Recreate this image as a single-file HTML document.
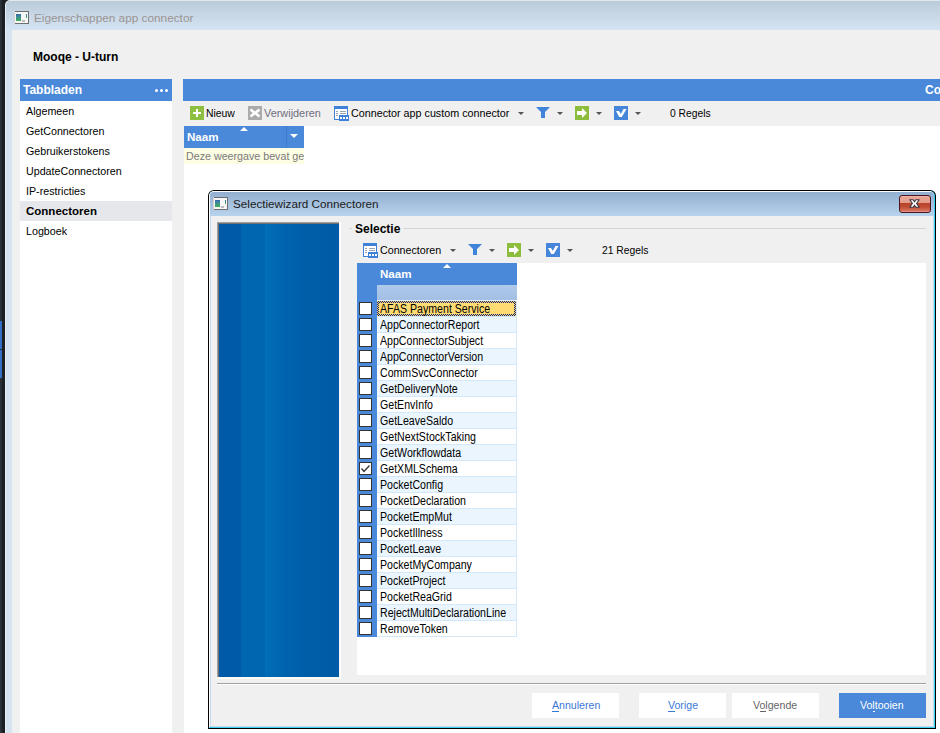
<!DOCTYPE html>
<html><head><meta charset="utf-8">
<style>
*{margin:0;padding:0;box-sizing:border-box}
html,body{width:940px;height:733px;overflow:hidden;background:#fff;font-family:"Liberation Sans",sans-serif;font-size:11px;color:#000}
.a{position:absolute}
.t{position:absolute;white-space:pre;line-height:1}
.w{color:#fff;font-weight:bold}
.dd{position:absolute;width:0;height:0;border-left:3px solid transparent;border-right:3px solid transparent;border-top:3px solid #505050}
</style></head><body>

<!-- dark strip -->
<div class="a" style="left:0;top:0;width:12px;height:733px;background:#1c2024"></div>
<div class="a" style="left:0;top:0;width:2px;height:733px;background:#2a3038"></div>
<div class="a" style="left:0;top:321px;width:2px;height:28px;background:#3270c6"></div>
<div class="a" style="left:0;top:350px;width:2px;height:28px;background:#3270c6"></div>

<!-- main window frame -->
<div class="a" style="left:5px;top:0;width:935px;height:733px;background:#e8eef6;border-top-left-radius:5px"></div>
<div class="a" style="left:6px;top:1px;width:934px;height:732px;background:#d6e3f1;border-top-left-radius:4px"></div>
<div class="a" style="left:9px;top:0;width:931px;height:1px;background:#e2e6ee"></div>
<div class="a" style="left:6px;top:1px;width:934px;height:29px;background:linear-gradient(#bacbd9,#d5e4f2);border-top-left-radius:4px"></div>
<div class="a" style="left:12px;top:30px;width:928px;height:703px;background:#f0f0f0"></div>

<!-- title icon -->
<svg class="a" style="left:14px;top:11px" width="15" height="13" shape-rendering="crispEdges"><defs><linearGradient id="i1g" x1="0" y1="0" x2="0" y2="1"><stop offset="0" stop-color="#3568b0"/><stop offset="0.35" stop-color="#3f8a98"/><stop offset="1" stop-color="#3cb058"/></linearGradient></defs><rect x="0" y="0" width="15" height="13" fill="#f6f6f6"/><rect x="0" y="0" width="15" height="1" fill="#6c6c6c"/><rect x="0" y="12" width="15" height="1" fill="#707070"/><rect x="14" y="0" width="1" height="13" fill="#6c6c6c"/><rect x="0" y="0" width="1" height="13" fill="#d4d4d4"/><rect x="2" y="3" width="5" height="7" fill="url(#i1g)"/><rect x="8" y="9" width="3" height="2" fill="#bcbcbc"/><rect x="12" y="3" width="1" height="4" fill="url(#i1g)"/></svg>
<div class="t" style="left:34px;top:13px;font-size:11.8px;color:#9b9494">Eigenschappen app connector</div>

<div class="t" style="left:33px;top:51px;font-size:12px;font-weight:bold">Mooqe - U-turn</div>

<!-- left panel -->
<div class="a" style="left:20px;top:79px;width:152px;height:654px;background:#fff"></div>
<div class="a" style="left:20px;top:79px;width:152px;height:22px;background:#4a88d9"></div>
<div class="t w" style="left:23px;top:84px;font-size:12px">Tabbladen</div>
<div class="a" style="left:155px;top:89px;width:3px;height:3px;border-radius:2px;background:#fff"></div>
<div class="a" style="left:160px;top:89px;width:3px;height:3px;border-radius:2px;background:#fff"></div>
<div class="a" style="left:165px;top:89px;width:3px;height:3px;border-radius:2px;background:#fff"></div>
<div class="a" style="left:20px;top:201px;width:152px;height:20px;background:#e6e7eb"></div>
<div class="t" style="left:26px;top:106px;font-size:10.7px">Algemeen</div>
<div class="t" style="left:26px;top:126px;font-size:10.7px">GetConnectoren</div>
<div class="t" style="left:26px;top:146px;font-size:10.7px">Gebruikerstokens</div>
<div class="t" style="left:26px;top:166px;font-size:10.7px">UpdateConnectoren</div>
<div class="t" style="left:26px;top:186px;font-size:10.7px">IP-restricties</div>
<div class="t" style="left:26px;top:206px;font-size:11.5px;font-weight:bold">Connectoren</div>
<div class="t" style="left:26px;top:226px;font-size:10.7px">Logboek</div>

<!-- right panel -->
<div class="a" style="left:183px;top:79px;width:757px;height:22px;background:#4a88d9"></div>
<div class="t w" style="left:925px;top:84px;font-size:12px">Co</div>
<div class="a" style="left:184px;top:126px;width:756px;height:607px;background:#fff"></div>

<!-- toolbar -->
<svg class="a" style="left:0;top:0" width="940" height="733" shape-rendering="crispEdges">
  <!-- plus -->
  <rect x="190" y="106" width="14" height="14" fill="#8fbf40"/>
  <rect x="193" y="112" width="8" height="2" fill="#fff"/>
  <rect x="196" y="109" width="2" height="8" fill="#fff"/>
  <!-- grey x -->
  <rect x="248" y="106" width="14" height="14" fill="#ababab"/>
  <path d="M250.5 109.5 L259.5 116.5 M259.5 109.5 L250.5 116.5" stroke="#fff" stroke-width="2.6" shape-rendering="geometricPrecision"/>
</svg>
<svg class="a" style="left:0;top:0" width="940" height="733" shape-rendering="crispEdges">
 <g id="tbi">
  <!-- connector icon -->
  <rect x="334" y="106" width="14" height="14" fill="#3f80d9"/>
  <rect x="335" y="109" width="12" height="10" fill="#fff"/>
  <rect x="336" y="111" width="2" height="1" fill="#9aa4b0"/><rect x="340" y="111" width="6" height="1" fill="#9aa4b0"/>
  <rect x="336" y="113" width="2" height="1" fill="#9aa4b0"/><rect x="340" y="113" width="6" height="1" fill="#9aa4b0"/>
  <rect x="336" y="115" width="2" height="1" fill="#9aa4b0"/>
  <rect x="339" y="115" width="10" height="6" fill="#3f80d9"/>
  <rect x="340" y="117" width="2" height="2" fill="#fff"/><rect x="343" y="117" width="2" height="2" fill="#fff"/><rect x="346" y="117" width="2" height="2" fill="#fff"/>
 </g>
 <g id="tbr">
  <path d="M518 112 L524 112 L521 115 Z" fill="#555" shape-rendering="geometricPrecision"/>
  <path d="M536 107 L550 107 L545 112 L545 118 L541 118 L541 112 Z" fill="#4084da" shape-rendering="geometricPrecision"/>
  <path d="M557 112 L563 112 L560 115 Z" fill="#555" shape-rendering="geometricPrecision"/>
  <rect x="575" y="106" width="14" height="14" fill="#8cbd3c"/>
  <path d="M577 111 L582 111 L582 108 L587 113 L582 118 L582 115 L577 115 Z" fill="#fff" shape-rendering="geometricPrecision"/>
  <path d="M596 112 L602 112 L599 115 Z" fill="#555" shape-rendering="geometricPrecision"/>
  <rect x="614" y="106" width="14" height="14" fill="#4686da"/>
  <path d="M616 111 L619 111 L620.8 114 L623.5 109 L626.5 109 L621.8 117 L619.2 117 Z" fill="#fff" shape-rendering="geometricPrecision"/>
  <path d="M635 112 L641 112 L638 115 Z" fill="#555" shape-rendering="geometricPrecision"/>
 </g>
</svg>
<div class="t" style="left:206px;top:109px;font-size:10.4px">Nieuw</div>
<div class="t" style="left:264px;top:108px;font-size:10.9px;color:#6e6e7e">Verwijderen</div>
<div class="t" style="left:351px;top:108px;font-size:10.75px">Connector app custom connector</div>
<div class="t" style="left:670px;top:109px;font-size:10.3px">0 Regels</div>

<!-- grid 1 -->
<div class="a" style="left:184px;top:126px;width:120px;height:22px;background:#4a88d9"></div>
<div class="a" style="left:286px;top:126px;width:1px;height:22px;background:#3d7bd0"></div>
<div class="t w" style="left:187px;top:131px;font-size:11.6px">Naam</div>
<div class="a" style="left:240px;top:127px;width:0;height:0;border-left:4px solid transparent;border-right:4px solid transparent;border-bottom:4px solid #fff"></div>
<div class="a" style="left:290px;top:134px;width:0;height:0;border-left:4px solid transparent;border-right:4px solid transparent;border-top:4px solid #fff"></div>
<div class="a" style="left:184px;top:148px;width:120px;height:16px;background:#fdfde4;overflow:hidden"><div class="t" style="left:2px;top:3px;font-size:10.7px;color:#7a7a7a">Deze weergave bevat geen</div></div>

<!-- dialog -->
<!-- dialog frame -->
<div class="a" style="left:208px;top:190px;width:728px;height:539px;background:#000;border-radius:6px 6px 0 0"></div>
<div class="a" style="left:209px;top:191px;width:726px;height:537px;background:#3cd0f0;border-radius:5px 5px 0 0"></div>
<div class="a" style="left:209px;top:191px;width:725px;height:536px;background:#fff;border-radius:5px 5px 0 0"></div>
<div class="a" style="left:210px;top:192px;width:724px;height:535px;background:#c4d8ee;border-radius:4px 4px 0 0"></div>
<div class="a" style="left:210px;top:192px;width:724px;height:24px;background:linear-gradient(#93afd0,#b8d3ec);border-radius:4px 4px 0 0"></div>
<div class="a" style="left:211px;top:216px;width:722px;height:510px;background:#f0f0f0"></div>
<!-- dialog icon -->
<svg class="a" style="left:213px;top:197px" width="15" height="13" shape-rendering="crispEdges"><defs><linearGradient id="i2g" x1="0" y1="0" x2="0" y2="1"><stop offset="0" stop-color="#3568b0"/><stop offset="0.35" stop-color="#3f8a98"/><stop offset="1" stop-color="#3cb058"/></linearGradient></defs><rect x="0" y="0" width="15" height="13" fill="#f6f6f6"/><rect x="0" y="0" width="15" height="1" fill="#6c6c6c"/><rect x="0" y="12" width="15" height="1" fill="#707070"/><rect x="14" y="0" width="1" height="13" fill="#6c6c6c"/><rect x="0" y="0" width="1" height="13" fill="#d4d4d4"/><rect x="2" y="3" width="5" height="7" fill="url(#i2g)"/><rect x="8" y="9" width="3" height="2" fill="#bcbcbc"/><rect x="12" y="3" width="1" height="4" fill="url(#i2g)"/></svg>
<div class="t" style="left:233px;top:198px;font-size:11.7px;color:#1a1a1a">Selectiewizard Connectoren</div>
<!-- close btn -->
<div class="a" style="left:899px;top:195px;width:32px;height:18px;border:1px solid #4a1520;border-radius:3px;background:linear-gradient(#f0c0b0 0,#e8a494 1px,#e49c8a 7px,#b84028 7px,#c04c34 11px,#d87462 15px,#eab0a0 16px)"></div>
<svg class="a" style="left:899px;top:195px" width="32" height="18"><path d="M10.8 4.8 L14.2 4.8 L15.5 6.8 L16.8 4.8 L20.2 4.8 L17.6 8.5 L20.2 12.2 L16.8 12.2 L15.5 10.2 L14.2 12.2 L10.8 12.2 L13.4 8.5 Z" fill="#fff" stroke="#3a3440" stroke-width="1.1" stroke-linejoin="round"/></svg>

<!-- wizard blue panel -->
<div class="a" style="left:217px;top:222px;width:124px;height:457px;background:#fff"></div>
<div class="a" style="left:217px;top:222px;width:123px;height:456px;background:#fcfaf8"></div>
<div class="a" style="left:217px;top:222px;width:122px;height:455px;background:#a0a0a0"></div>
<div class="a" style="left:218px;top:223px;width:121px;height:454px;background:#707070"></div>
<div class="a" style="left:219px;top:224px;width:120px;height:453px;background:linear-gradient(90deg,#005aa8 0,#005aa8 22px,#0066b0 22px,#0066b0 46px,#006eb8 46px,#0068b2 58px,#0062ae 67px,#005ea8 86px,#005aa6 100%)"></div>

<!-- group box -->
<div class="a" style="left:349px;top:228px;width:3px;height:1px;background:#d5d5d5"></div>
<div class="a" style="left:403px;top:228px;width:523px;height:1px;background:#d5d5d5"></div>
<div class="t" style="left:355px;top:223px;font-size:12px;font-weight:bold">Selectie</div>

<!-- dialog toolbar -->
<svg class="a" style="left:0;top:0" width="940" height="733" shape-rendering="crispEdges">
  <use href="#tbi" transform="translate(29,137)"/>
  <use href="#tbr" transform="translate(-68,137)"/>
</svg>
<div class="t" style="left:380px;top:245px;font-size:10.7px">Connectoren</div>
<div class="t" style="left:602px;top:246px;font-size:10.3px">21 Regels</div>

<!-- grid area -->
<div class="a" style="left:357px;top:263px;width:569px;height:412px;background:#fff"></div>
<div class="a" style="left:357px;top:263px;width:160px;height:22px;background:#4a88d9"></div>
<div class="a" style="left:357px;top:263px;width:20px;height:374px;background:#4a88d9"></div>
<div class="t w" style="left:380px;top:268px;font-size:11.6px">Naam</div>
<div class="a" style="left:443px;top:264px;width:0;height:0;border-left:4px solid transparent;border-right:4px solid transparent;border-bottom:4px solid #fff"></div>
<div class="a" style="left:377px;top:285px;width:140px;height:15px;background:linear-gradient(#b0c9ea,#a2bfe6)"></div>
<!--ROWS-->
<div class="a" style="left:377px;top:301px;width:140px;height:16px;background:#ffdb73;border-bottom:1px solid #d4e8fb;border-right:1px solid #d4e8fb"></div>
<div class="a" style="left:377px;top:300px;width:140px;height:1px;background:#e6f0fb"></div>
<div class="a" style="left:377px;top:301px;width:139px;height:15px;background:repeating-conic-gradient(#101c78 0 25%,#ffdb73 0 50%) 0 0/2px 2px"></div>
<div class="a" style="left:379px;top:303px;width:135px;height:11px;background:#ffdb73"></div>
<div class="t" style="left:380px;top:303px;font-size:12px;transform:scaleX(0.883);transform-origin:0 0">AFAS Payment Service</div>
<div class="a" style="left:359px;top:302px;width:13px;height:13px;background:#fff;border:1.5px solid #333"></div>
<div class="a" style="left:377px;top:317px;width:140px;height:16px;background:#eaf5fe;border-bottom:1px solid #d4e8fb;border-right:1px solid #d4e8fb"></div>
<div class="t" style="left:380px;top:319px;font-size:12px;transform:scaleX(0.883);transform-origin:0 0">AppConnectorReport</div>
<div class="a" style="left:359px;top:318px;width:13px;height:13px;background:#fff;border:1.5px solid #333"></div>
<div class="a" style="left:377px;top:333px;width:140px;height:16px;background:#fff;border-bottom:1px solid #d4e8fb;border-right:1px solid #d4e8fb"></div>
<div class="t" style="left:380px;top:335px;font-size:12px;transform:scaleX(0.883);transform-origin:0 0">AppConnectorSubject</div>
<div class="a" style="left:359px;top:334px;width:13px;height:13px;background:#fff;border:1.5px solid #333"></div>
<div class="a" style="left:377px;top:349px;width:140px;height:16px;background:#eaf5fe;border-bottom:1px solid #d4e8fb;border-right:1px solid #d4e8fb"></div>
<div class="t" style="left:380px;top:351px;font-size:12px;transform:scaleX(0.883);transform-origin:0 0">AppConnectorVersion</div>
<div class="a" style="left:359px;top:350px;width:13px;height:13px;background:#fff;border:1.5px solid #333"></div>
<div class="a" style="left:377px;top:365px;width:140px;height:16px;background:#fff;border-bottom:1px solid #d4e8fb;border-right:1px solid #d4e8fb"></div>
<div class="t" style="left:380px;top:367px;font-size:12px;transform:scaleX(0.883);transform-origin:0 0">CommSvcConnector</div>
<div class="a" style="left:359px;top:366px;width:13px;height:13px;background:#fff;border:1.5px solid #333"></div>
<div class="a" style="left:377px;top:381px;width:140px;height:16px;background:#eaf5fe;border-bottom:1px solid #d4e8fb;border-right:1px solid #d4e8fb"></div>
<div class="t" style="left:380px;top:383px;font-size:12px;transform:scaleX(0.883);transform-origin:0 0">GetDeliveryNote</div>
<div class="a" style="left:359px;top:382px;width:13px;height:13px;background:#fff;border:1.5px solid #333"></div>
<div class="a" style="left:377px;top:397px;width:140px;height:16px;background:#fff;border-bottom:1px solid #d4e8fb;border-right:1px solid #d4e8fb"></div>
<div class="t" style="left:380px;top:399px;font-size:12px;transform:scaleX(0.883);transform-origin:0 0">GetEnvInfo</div>
<div class="a" style="left:359px;top:398px;width:13px;height:13px;background:#fff;border:1.5px solid #333"></div>
<div class="a" style="left:377px;top:413px;width:140px;height:16px;background:#eaf5fe;border-bottom:1px solid #d4e8fb;border-right:1px solid #d4e8fb"></div>
<div class="t" style="left:380px;top:415px;font-size:12px;transform:scaleX(0.883);transform-origin:0 0">GetLeaveSaldo</div>
<div class="a" style="left:359px;top:414px;width:13px;height:13px;background:#fff;border:1.5px solid #333"></div>
<div class="a" style="left:377px;top:429px;width:140px;height:16px;background:#fff;border-bottom:1px solid #d4e8fb;border-right:1px solid #d4e8fb"></div>
<div class="t" style="left:380px;top:431px;font-size:12px;transform:scaleX(0.883);transform-origin:0 0">GetNextStockTaking</div>
<div class="a" style="left:359px;top:430px;width:13px;height:13px;background:#fff;border:1.5px solid #333"></div>
<div class="a" style="left:377px;top:445px;width:140px;height:16px;background:#eaf5fe;border-bottom:1px solid #d4e8fb;border-right:1px solid #d4e8fb"></div>
<div class="t" style="left:380px;top:447px;font-size:12px;transform:scaleX(0.883);transform-origin:0 0">GetWorkflowdata</div>
<div class="a" style="left:359px;top:446px;width:13px;height:13px;background:#fff;border:1.5px solid #333"></div>
<div class="a" style="left:377px;top:461px;width:140px;height:16px;background:#fff;border-bottom:1px solid #d4e8fb;border-right:1px solid #d4e8fb"></div>
<div class="t" style="left:380px;top:463px;font-size:12px;transform:scaleX(0.883);transform-origin:0 0">GetXMLSchema</div>
<div class="a" style="left:359px;top:462px;width:13px;height:13px;background:#fff;border:1.5px solid #333"></div>
<div class="a" style="left:377px;top:477px;width:140px;height:16px;background:#eaf5fe;border-bottom:1px solid #d4e8fb;border-right:1px solid #d4e8fb"></div>
<div class="t" style="left:380px;top:479px;font-size:12px;transform:scaleX(0.883);transform-origin:0 0">PocketConfig</div>
<div class="a" style="left:359px;top:478px;width:13px;height:13px;background:#fff;border:1.5px solid #333"></div>
<div class="a" style="left:377px;top:493px;width:140px;height:16px;background:#fff;border-bottom:1px solid #d4e8fb;border-right:1px solid #d4e8fb"></div>
<div class="t" style="left:380px;top:495px;font-size:12px;transform:scaleX(0.883);transform-origin:0 0">PocketDeclaration</div>
<div class="a" style="left:359px;top:494px;width:13px;height:13px;background:#fff;border:1.5px solid #333"></div>
<div class="a" style="left:377px;top:509px;width:140px;height:16px;background:#eaf5fe;border-bottom:1px solid #d4e8fb;border-right:1px solid #d4e8fb"></div>
<div class="t" style="left:380px;top:511px;font-size:12px;transform:scaleX(0.883);transform-origin:0 0">PocketEmpMut</div>
<div class="a" style="left:359px;top:510px;width:13px;height:13px;background:#fff;border:1.5px solid #333"></div>
<div class="a" style="left:377px;top:525px;width:140px;height:16px;background:#fff;border-bottom:1px solid #d4e8fb;border-right:1px solid #d4e8fb"></div>
<div class="t" style="left:380px;top:527px;font-size:12px;transform:scaleX(0.883);transform-origin:0 0">PocketIllness</div>
<div class="a" style="left:359px;top:526px;width:13px;height:13px;background:#fff;border:1.5px solid #333"></div>
<div class="a" style="left:377px;top:541px;width:140px;height:16px;background:#eaf5fe;border-bottom:1px solid #d4e8fb;border-right:1px solid #d4e8fb"></div>
<div class="t" style="left:380px;top:543px;font-size:12px;transform:scaleX(0.883);transform-origin:0 0">PocketLeave</div>
<div class="a" style="left:359px;top:542px;width:13px;height:13px;background:#fff;border:1.5px solid #333"></div>
<div class="a" style="left:377px;top:557px;width:140px;height:16px;background:#fff;border-bottom:1px solid #d4e8fb;border-right:1px solid #d4e8fb"></div>
<div class="t" style="left:380px;top:559px;font-size:12px;transform:scaleX(0.883);transform-origin:0 0">PocketMyCompany</div>
<div class="a" style="left:359px;top:558px;width:13px;height:13px;background:#fff;border:1.5px solid #333"></div>
<div class="a" style="left:377px;top:573px;width:140px;height:16px;background:#eaf5fe;border-bottom:1px solid #d4e8fb;border-right:1px solid #d4e8fb"></div>
<div class="t" style="left:380px;top:575px;font-size:12px;transform:scaleX(0.883);transform-origin:0 0">PocketProject</div>
<div class="a" style="left:359px;top:574px;width:13px;height:13px;background:#fff;border:1.5px solid #333"></div>
<div class="a" style="left:377px;top:589px;width:140px;height:16px;background:#fff;border-bottom:1px solid #d4e8fb;border-right:1px solid #d4e8fb"></div>
<div class="t" style="left:380px;top:591px;font-size:12px;transform:scaleX(0.883);transform-origin:0 0">PocketReaGrid</div>
<div class="a" style="left:359px;top:590px;width:13px;height:13px;background:#fff;border:1.5px solid #333"></div>
<div class="a" style="left:377px;top:605px;width:140px;height:16px;background:#eaf5fe;border-bottom:1px solid #d4e8fb;border-right:1px solid #d4e8fb"></div>
<div class="t" style="left:380px;top:607px;font-size:12px;transform:scaleX(0.883);transform-origin:0 0">RejectMultiDeclarationLine</div>
<div class="a" style="left:359px;top:606px;width:13px;height:13px;background:#fff;border:1.5px solid #333"></div>
<div class="a" style="left:377px;top:621px;width:140px;height:16px;background:#fff;border-bottom:1px solid #d4e8fb;border-right:1px solid #d4e8fb"></div>
<div class="t" style="left:380px;top:623px;font-size:12px;transform:scaleX(0.883);transform-origin:0 0">RemoveToken</div>
<div class="a" style="left:359px;top:622px;width:13px;height:13px;background:#fff;border:1.5px solid #333"></div>
<svg class="a" style="left:359px;top:462px" width="13" height="13"><path d="M2.5 6.5 L5 9.5 L10.5 3.5" fill="none" stroke="#333" stroke-width="1.3"/></svg>
<!--/ROWS-->

<!-- bottom -->
<div class="a" style="left:217px;top:683px;width:709px;height:1px;background:#a0a0a0"></div>
<div class="a" style="left:217px;top:684px;width:709px;height:1px;background:#fff"></div>
<div class="a" style="left:532px;top:693px;width:87px;height:25px;background:#fff"></div>
<div class="a" style="left:639px;top:693px;width:87px;height:25px;background:#fff"></div>
<div class="a" style="left:732px;top:693px;width:87px;height:25px;background:#fff"></div>
<div class="a" style="left:839px;top:693px;width:87px;height:25px;background:#4a88d9"></div>
<div class="t" style="left:552px;top:700px;font-size:10.6px;color:#3a78d8">Annuleren</div>
<div class="t" style="left:668px;top:700px;font-size:10.6px;color:#3a78d8">Vorige</div>
<div class="t" style="left:753px;top:700px;font-size:10.6px;color:#666">Volgende</div>
<div class="t" style="left:860px;top:700px;font-size:10.6px;color:#fff">Voltooien</div>

<div class="a" style="left:552px;top:711px;width:7px;height:1px;background:#3a78d8"></div>
<div class="a" style="left:668px;top:711px;width:7px;height:1px;background:#3a78d8"></div>
<div class="a" style="left:760px;top:711px;width:6px;height:1px;background:#666"></div>
<div class="a" style="left:873px;top:711px;width:2px;height:1px;background:#fff"></div>
</body></html>
